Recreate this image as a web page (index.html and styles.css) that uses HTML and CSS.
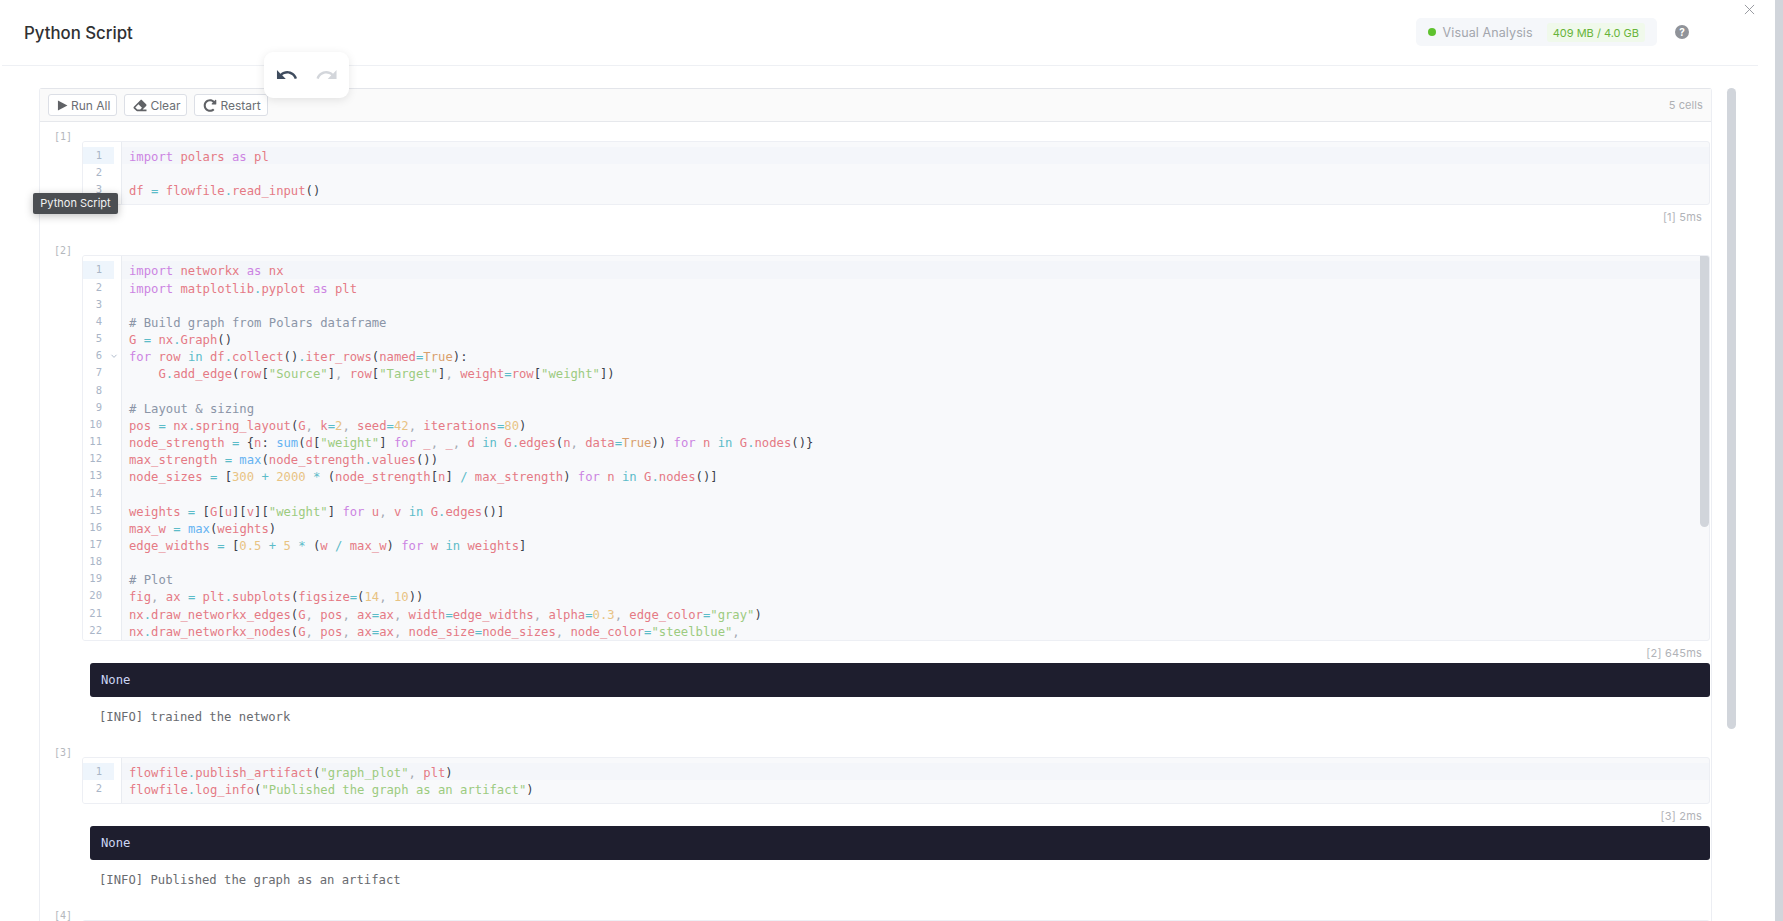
FILE: index.html
```html
<!DOCTYPE html>
<html lang="en">
<head>
<meta charset="utf-8">
<title>Python Script</title>
<link rel="stylesheet" href="styles.css">
</head>
<body>
<div class="modal">
  <header class="head">
    <h1 class="title">Python Script</h1>
    <div class="status">
      <span class="dot"></span>
      <span class="kernel">Visual Analysis</span>
      <span class="mem">409 MB / 4.0 GB</span>
    </div>
    <span class="help">?</span>
  </header>
  <main class="body">
    <section class="notebook">
      <div class="toolbar">
        <button class="btn"><svg class="ic" viewBox="0 0 12 12"><path d="M1 .6v10.8L11.4 6z"/></svg>Run All</button>
        <button class="btn"><svg class="ic ic-wide" viewBox="0 0 512 512"><path d="M497.941 273.941c18.745-18.745 18.745-49.137 0-67.882l-160-160c-18.745-18.745-49.137-18.745-67.882 0l-256 256c-18.745 18.745-18.745 49.137 0 67.882l96 96A48.004 48.004 0 0 0 144 480h356c6.627 0 12-5.373 12-12v-40c0-6.627-5.373-12-12-12H355.883l142.058-142.059zm-302.627-62.627l137.373 137.373L265.373 416H150.628l-80-80 124.686-124.686z"/></svg>Clear</button>
        <button class="btn"><svg class="ic ic-wide" viewBox="0 0 512 512"><path d="M256.455 8c66.269.119 126.437 26.233 170.859 68.685l35.715-35.715C478.149 25.851 504 36.559 504 57.941V192c0 13.255-10.745 24-24 24H345.941c-21.382 0-32.09-25.851-16.971-40.971l41.75-41.75c-30.864-28.899-70.801-44.907-113.23-45.273-92.398-.798-170.283 73.977-169.484 169.442C88.764 348.009 162.184 424 256 424c41.127 0 79.997-14.678 110.629-41.556 4.743-4.161 11.906-3.908 16.368.553l39.662 39.662c4.872 4.872 4.631 12.815-.482 17.433C378.202 479.813 319.926 504 256 504 119.034 504 8.001 392.967 8 256.002 7.999 119.193 119.646 7.755 256.455 8z"/></svg>Restart</button>
        <span class="count">5 cells</span>
      </div>

      <article class="cell">
        <div class="label">[1]</div>
        <div class="content">
          <div class="editor">
            <div class="gutter"><div class="gn on">1</div><div class="gn">2</div><div class="gn">3</div></div>
            <div class="code">
              <div class="ln on"><i class="k">import</i> <i class="v">polars</i> <i class="k">as</i> <i class="v">pl</i></div>
              <div class="ln"></div>
              <div class="ln"><i class="v">df</i> <i class="o">=</i> <i class="v">flowfile</i><i class="o">.</i><i class="v">read_input</i>()</div>
            </div>
          </div>
          <div class="time">[1] 5ms</div>
        </div>
      </article>

      <article class="cell">
        <div class="label">[2]</div>
        <div class="content">
          <div class="editor editor-tall">
            <div class="gutter"><div class="gn on">1</div><div class="gn">2</div><div class="gn">3</div><div class="gn">4</div><div class="gn">5</div><div class="gn">6<svg class="fold" viewBox="0 0 8 8"><path d="M1.5 2.8 4 5.4l2.5-2.6"/></svg></div><div class="gn">7</div><div class="gn">8</div><div class="gn">9</div><div class="gn">10</div><div class="gn">11</div><div class="gn">12</div><div class="gn">13</div><div class="gn">14</div><div class="gn">15</div><div class="gn">16</div><div class="gn">17</div><div class="gn">18</div><div class="gn">19</div><div class="gn">20</div><div class="gn">21</div><div class="gn">22</div></div>
            <div class="code">
              <div class="ln on"><i class="k">import</i> <i class="v">networkx</i> <i class="k">as</i> <i class="v">nx</i></div>
              <div class="ln"><i class="k">import</i> <i class="v">matplotlib</i><i class="o">.</i><i class="v">pyplot</i> <i class="k">as</i> <i class="v">plt</i></div>
              <div class="ln"></div>
              <div class="ln"><i class="c"># Build graph from Polars dataframe</i></div>
              <div class="ln"><i class="v">G</i> <i class="o">=</i> <i class="v">nx</i><i class="o">.</i><i class="v">Graph</i>()</div>
              <div class="ln"><i class="k">for</i> <i class="v">row</i> <i class="o">in</i> <i class="v">df</i><i class="o">.</i><i class="v">collect</i>()<i class="o">.</i><i class="v">iter_rows</i>(<i class="v">named</i><i class="o">=</i><i class="t">True</i>):</div>
              <div class="ln">    <i class="v">G</i><i class="o">.</i><i class="v">add_edge</i>(<i class="v">row</i>[<i class="s">"Source"</i>]<i class="m">,</i> <i class="v">row</i>[<i class="s">"Target"</i>]<i class="m">,</i> <i class="v">weight</i><i class="o">=</i><i class="v">row</i>[<i class="s">"weight"</i>])</div>
              <div class="ln"></div>
              <div class="ln"><i class="c"># Layout &amp; sizing</i></div>
              <div class="ln"><i class="v">pos</i> <i class="o">=</i> <i class="v">nx</i><i class="o">.</i><i class="v">spring_layout</i>(<i class="v">G</i><i class="m">,</i> <i class="v">k</i><i class="o">=</i><i class="n">2</i><i class="m">,</i> <i class="v">seed</i><i class="o">=</i><i class="n">42</i><i class="m">,</i> <i class="v">iterations</i><i class="o">=</i><i class="n">80</i>)</div>
              <div class="ln"><i class="v">node_strength</i> <i class="o">=</i> {<i class="v">n</i>: <i class="b">sum</i>(<i class="v">d</i>[<i class="s">"weight"</i>] <i class="k">for</i> <i class="v">_</i><i class="m">,</i> <i class="v">_</i><i class="m">,</i> <i class="v">d</i> <i class="o">in</i> <i class="v">G</i><i class="o">.</i><i class="v">edges</i>(<i class="v">n</i><i class="m">,</i> <i class="v">data</i><i class="o">=</i><i class="t">True</i>)) <i class="k">for</i> <i class="v">n</i> <i class="o">in</i> <i class="v">G</i><i class="o">.</i><i class="v">nodes</i>()}</div>
              <div class="ln"><i class="v">max_strength</i> <i class="o">=</i> <i class="b">max</i>(<i class="v">node_strength</i><i class="o">.</i><i class="v">values</i>())</div>
              <div class="ln"><i class="v">node_sizes</i> <i class="o">=</i> [<i class="n">300</i> <i class="o">+</i> <i class="n">2000</i> <i class="o">*</i> (<i class="v">node_strength</i>[<i class="v">n</i>] <i class="o">/</i> <i class="v">max_strength</i>) <i class="k">for</i> <i class="v">n</i> <i class="o">in</i> <i class="v">G</i><i class="o">.</i><i class="v">nodes</i>()]</div>
              <div class="ln"></div>
              <div class="ln"><i class="v">weights</i> <i class="o">=</i> [<i class="v">G</i>[<i class="v">u</i>][<i class="v">v</i>][<i class="s">"weight"</i>] <i class="k">for</i> <i class="v">u</i><i class="m">,</i> <i class="v">v</i> <i class="o">in</i> <i class="v">G</i><i class="o">.</i><i class="v">edges</i>()]</div>
              <div class="ln"><i class="v">max_w</i> <i class="o">=</i> <i class="b">max</i>(<i class="v">weights</i>)</div>
              <div class="ln"><i class="v">edge_widths</i> <i class="o">=</i> [<i class="n">0.5</i> <i class="o">+</i> <i class="n">5</i> <i class="o">*</i> (<i class="v">w</i> <i class="o">/</i> <i class="v">max_w</i>) <i class="k">for</i> <i class="v">w</i> <i class="o">in</i> <i class="v">weights</i>]</div>
              <div class="ln"></div>
              <div class="ln"><i class="c"># Plot</i></div>
              <div class="ln"><i class="v">fig</i><i class="m">,</i> <i class="v">ax</i> <i class="o">=</i> <i class="v">plt</i><i class="o">.</i><i class="v">subplots</i>(<i class="v">figsize</i><i class="o">=</i>(<i class="n">14</i><i class="m">,</i> <i class="n">10</i>))</div>
              <div class="ln"><i class="v">nx</i><i class="o">.</i><i class="v">draw_networkx_edges</i>(<i class="v">G</i><i class="m">,</i> <i class="v">pos</i><i class="m">,</i> <i class="v">ax</i><i class="o">=</i><i class="v">ax</i><i class="m">,</i> <i class="v">width</i><i class="o">=</i><i class="v">edge_widths</i><i class="m">,</i> <i class="v">alpha</i><i class="o">=</i><i class="n">0.3</i><i class="m">,</i> <i class="v">edge_color</i><i class="o">=</i><i class="s">"gray"</i>)</div>
              <div class="ln"><i class="v">nx</i><i class="o">.</i><i class="v">draw_networkx_nodes</i>(<i class="v">G</i><i class="m">,</i> <i class="v">pos</i><i class="m">,</i> <i class="v">ax</i><i class="o">=</i><i class="v">ax</i><i class="m">,</i> <i class="v">node_size</i><i class="o">=</i><i class="v">node_sizes</i><i class="m">,</i> <i class="v">node_color</i><i class="o">=</i><i class="s">"steelblue"</i><i class="m">,</i></div>
            </div>
            <span class="thumb"></span>
          </div>
          <div class="time">[2] 645ms</div>
          <div class="result">None</div>
          <div class="log">[INFO] trained the network</div>
        </div>
      </article>

      <article class="cell">
        <div class="label">[3]</div>
        <div class="content">
          <div class="editor">
            <div class="gutter"><div class="gn on">1</div><div class="gn">2</div></div>
            <div class="code">
              <div class="ln on"><i class="v">flowfile</i><i class="o">.</i><i class="v">publish_artifact</i>(<i class="s">"graph_plot"</i><i class="m">,</i> <i class="v">plt</i>)</div>
              <div class="ln"><i class="v">flowfile</i><i class="o">.</i><i class="v">log_info</i>(<i class="s">"Published the graph as an artifact"</i>)</div>
            </div>
          </div>
          <div class="time">[3] 2ms</div>
          <div class="result">None</div>
          <div class="log">[INFO] Published the graph as an artifact</div>
        </div>
      </article>

      <article class="cell">
        <div class="label">[4]</div>
        <div class="content">
          <div class="editor editor-next"></div>
        </div>
      </article>
    </section>
  </main>

  <div class="history">
    <svg class="hist" viewBox="0 0 24 24"><path d="M12.5 8C9.85 8 7.45 9 5.6 10.6L2 7v9h9l-3.62-3.62c1.39-1.16 3.16-1.88 5.12-1.88 3.54 0 6.55 2.31 7.6 5.5l2.37-.78C21.08 11.03 17.15 8 12.5 8z"/></svg>
    <svg class="hist hist-off" viewBox="0 0 24 24"><path d="M18.4 10.6C16.55 9 14.15 8 11.5 8c-4.65 0-8.58 3.03-9.96 7.22L3.9 16c1.05-3.19 4.05-5.5 7.6-5.5 1.95 0 3.73.72 5.12 1.88L13 16h9V7z"/></svg>
  </div>
  <div class="tooltip">Python Script</div>
  <svg class="close" viewBox="0 0 12 12"><path d="M1 1l10 10M11 1 1 11"/></svg>
  <span class="bar"></span>
  <span class="page-bar"></span>
</div>
</body>
</html>
```
FILE: styles.css
```css
* { box-sizing: border-box; }
html, body { margin: 0; height: 921px; overflow: hidden; background: #fff; }
body { font-family: Inter, "Liberation Sans", sans-serif; color: #303133; }
.modal { position: relative; height: 921px; overflow: hidden; }

.head { display: flex; align-items: center; height: 66px; margin: 0 25px 0 2px; padding: 0 69px 0 22px; border-bottom: 1px solid #eef0f4; }
.title { flex: 1; margin: 1px 0 0; font-size: 16.8px; font-weight: 500; color: #303133; }
.status { display: flex; align-items: center; height: 28px; padding: 0 12px 0 12px; margin-top: -1px; background: #f5f7fa; border-radius: 5px; }
.dot { width: 8px; height: 8px; border-radius: 50%; background: #5fc22f; }
.kernel { margin: 1px 14px 0 7px; font-size: 12.5px; letter-spacing: .1px; color: #a3a6ad; }
.mem { padding: 0 6px; height: 19px; line-height: 20px; font-size: 11px; color: #67b43a; background: #f0f9eb; border-radius: 3px; }
.help { width: 14px; height: 14px; margin: -1px 0 0 18px; border-radius: 50%; background: #909399; color: #fff; font-size: 10px; line-height: 14px; font-weight: 700; text-align: center; }

.body { padding: 22px 0 0 39px; }
.notebook { width: 1673px; min-height: 900px; border: 1px solid #eceef3; border-top-color: #e3e5ea; border-radius: 3px 3px 0 0; }
.toolbar { display: flex; align-items: center; gap: 7px; height: 33px; padding: 0 8px; background: #fafafa; border-bottom: 1px solid #e6e8ec; }
.btn { display: flex; align-items: center; gap: 3px; height: 22px; padding: 0 6px 0 8px; font: 12px Inter, "Liberation Sans", sans-serif; color: #6b6e74; background: #fff; border: 1px solid #dcdfe6; border-radius: 3px; }
.ic { width: 11px; height: 11px; fill: #606266; }
.ic-wide { width: 14px; height: 13px; }
.count { margin-left: auto; font-size: 11px; letter-spacing: .1px; color: #aeb0b4; }

.cell { display: grid; grid-template-columns: 41px 1px 1fr; padding-top: 8px; }
.cell + .cell { padding-top: 0; }
.label { padding: 1px 0 0 14px; height: 13px; font: 10px/12px "DejaVu Sans Mono", monospace; color: #b4b7bd; }
.content { grid-column: 3; min-width: 0; padding-top: 11px; padding-bottom: 21px; padding-right: 1px; }

.editor { position: relative; display: flex; background: #f8f9fb; border: 1px solid #edeff4; border-radius: 3px; overflow: hidden; }
.editor-tall { height: 385.5px; }
.editor-next { height: 40px; }
.gutter { flex: none; width: 39px; padding: 5px 0 6px; background: #fff; border-right: 1px solid #e9ecf1; }
.gn { position: relative; width: 31px; height: 17.17px; padding-right: 12px; font: 10.5px/16px "DejaVu Sans Mono", monospace; text-align: right; color: #a9b5c7; }
.gn.on { background: #eef5fc; }
.fold { position: absolute; left: 27px; top: 5px; width: 8px; height: 8px; fill: none; stroke: #a9b5c7; stroke-width: .9; }
.code { flex: 1; min-width: 0; padding: 5px 0 6px; font: 12.22px/20px "DejaVu Sans Mono", monospace; color: #3a3f4b; }
.ln { height: 17.17px; padding-left: 7px; white-space: pre; }
.ln.on { background: #f4f6fa; }
.code i { font-style: normal; }
.k { color: #cc84e2; }
.v { color: #e57a85; }
.o { color: #5cbcc9; }
.s { color: #9ccb80; }
.n { color: #e8c383; }
.t { color: #d99f6d; }
.b { color: #66b3f2; }
.c { color: #8b95a7; }
.m { color: #a5aab3; }
.thumb { position: absolute; top: 0; right: 0; width: 9px; height: 271px; background: #d1d5db; border-radius: 0 0 5px 5px; }

.time { margin-top: 6px; padding-right: 8px; height: 12px; font-size: 11px; line-height: 12px; letter-spacing: .2px; text-align: right; color: #b1b3b8; }
.result { margin: 4px 0 0 8px; height: 34px; padding-left: 11px; font: 12.22px/35px "DejaVu Sans Mono", monospace; color: #cdd6f4; background: #1e1e2e; border-radius: 3px; }
.log { margin: 12px 0 0 7px; padding-left: 10px; height: 16px; font: 12.22px/16px "DejaVu Sans Mono", monospace; color: #696b70; }

.history { position: absolute; left: 264px; top: 52px; display: flex; align-items: center; gap: 16px; width: 85px; height: 46px; padding: 0 11px; background: #fff; border-radius: 9px; box-shadow: 0 2px 10px rgba(0, 0, 0, .1); }
.hist { width: 24px; height: 24px; fill: #3f4c5e; }
.hist-off { fill: #d3d6db; }
.tooltip { position: absolute; left: 33px; top: 193px; width: 85px; height: 21px; font-size: 11px; line-height: 21px; text-align: center; color: #f2f2f2; background: #4b4e52; border-radius: 2px; box-shadow: 0 2px 8px rgba(0, 0, 0, .25); }
.close { position: absolute; left: 1744px; top: 4px; width: 11px; height: 11px; fill: none; stroke: #909399; stroke-width: 1; }
.bar { position: absolute; left: 1727px; top: 88px; width: 9px; height: 641px; background: #d1d5db; border-radius: 5px; }
.page-bar { position: absolute; left: 1775px; top: 0; width: 8px; height: 921px; background: #d1d5db; }
```
